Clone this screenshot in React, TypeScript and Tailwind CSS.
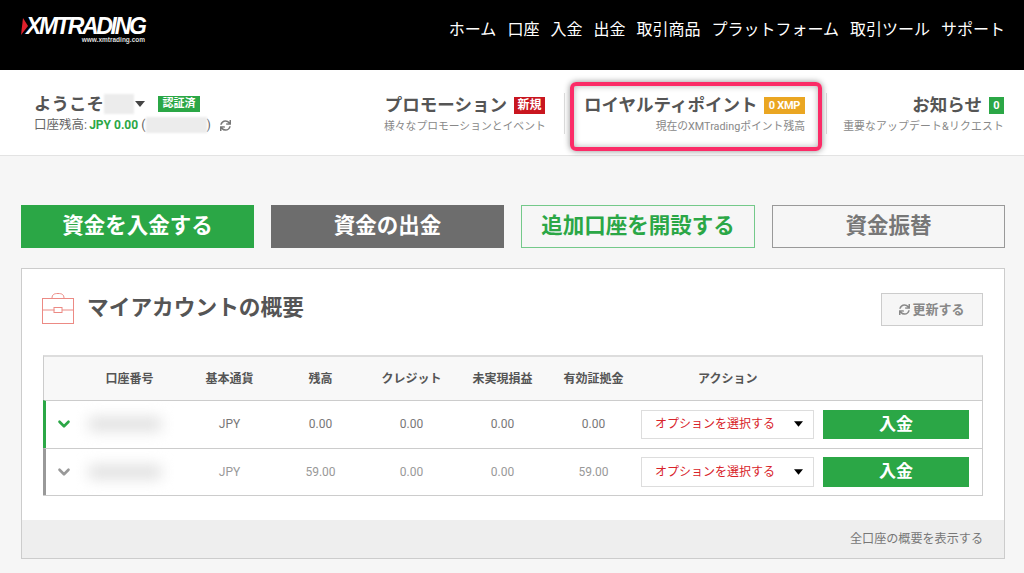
import { ChevronDown } from "lucide-react"
import { FaSync } from "react-icons/fa"

const NAV = ["ホーム", "口座", "入金", "出金", "取引商品", "プラットフォーム", "取引ツール", "サポート"]

const FONT = "font-['Roboto','Noto_Sans_CJK_JP',sans-serif]"

function Caret({ className = "" }: { className?: string }) {
  return (
    <svg width="10" height="6" viewBox="0 0 10 6" className={className}>
      <path d="M0 0h10L5 6z" fill="currentColor" />
    </svg>
  )
}

function Logo() {
  return (
    <div className="relative w-[126px] h-[30px]">
      <svg width="7" height="17" viewBox="0 0 7 17" className="absolute left-0 top-[1px]">
        <path d="M2 0l5 8-7 9z" fill="#e0202c" />
      </svg>
      <span className="absolute left-[5px] top-0 text-[23px] leading-[18px] font-black italic text-white tracking-[-2.3px] font-['Liberation_Sans',sans-serif]">
        XMTRADING
      </span>
      <span className="absolute right-[2px] top-[20px] text-[6.5px] leading-[6px] font-bold text-[#ddd] font-['Liberation_Sans',sans-serif]">
        www.xmtrading.com
      </span>
    </div>
  )
}

function Redact({ className }: { className: string }) {
  return <span className={`inline-block bg-[#ececec] blur-[1px] ${className}`} />
}

function Row({ active, balance, equity }: { active: boolean; balance: string; equity: string }) {
  const text = active ? "text-[#777]" : "text-[#999]"
  return (
    <div
      className={`grid grid-cols-[39px_99px_91px_91px_91px_91px_91px_1fr] items-center h-[47.5px] border-t border-[#ccc] border-l-[3px] -ml-px text-xs ${text} ${
        active ? "border-l-[#2ba746]" : "border-l-[#999]"
      }`}
    >
      <div className="flex justify-center pr-[3px]">
        <ChevronDown size={18} strokeWidth={3.5} className={active ? "text-[#2ba746]" : "text-[#999]"} />
      </div>
      <div className="pl-[4px]">
        <span className="block w-[72px] h-[14px] bg-[#e0e0e0] blur-[7px]" />
      </div>
      <div className="text-center">JPY</div>
      <div className="text-center">{balance}</div>
      <div className="text-center">0.00</div>
      <div className="text-center">0.00</div>
      <div className="text-center">{equity}</div>
      <div className="flex gap-[9px] pl-[2px]">
        <div className="flex items-center justify-between w-[173px] h-[29.5px] border border-[#ddd] bg-white pl-[13px] pr-[10px] text-[#d8232a]">
          <span>オプションを選択する</span>
          <Caret className="text-black w-[9px]" />
        </div>
        <div className="flex items-center justify-center w-[146px] h-[29.5px] bg-[#2ba746] text-white text-[17px] font-bold">
          入金
        </div>
      </div>
    </div>
  )
}

export default function App() {
  return (
    <div className={`${FONT} w-[1024px] h-[573px] overflow-hidden bg-[#f6f6f6] text-[#444]`}>
      <header className="flex items-center justify-between h-[70px] bg-black pl-[21px] pr-[19px]">
        <div className="-mt-[7px]">
          <Logo />
        </div>
        <nav className="flex gap-[11px] text-base text-white -mt-[11px]">
          {NAV.map((n) => (
            <a key={n}>{n}</a>
          ))}
        </nav>
      </header>

      <div className="flex h-[86px] bg-white border-b border-[#e3e3e3] pl-[34px] pr-[20px] pt-[23px]">
        <div className="w-[350px] pt-[1px]">
          <div className="flex items-center h-[20px]">
            <span className="text-[17.5px] font-bold leading-[20px] text-[#555]">ようこそ</span>
            <Redact className="w-[30px] h-[20px]" />
            <Caret className="text-[#444] ml-[1px]" />
            <span className="ml-[13px] px-[4.5px] h-[16px] leading-[16px] bg-[#2ba746] text-white text-[11px] font-bold">認証済</span>
          </div>
          <div className="flex items-center mt-[3px] text-[12.5px] text-[#666] h-[16px]">
            口座残高:&nbsp;<span className="-ml-[1px] text-xs font-bold text-[#2ba746]">JPY 0.00</span>&nbsp;(
            <Redact className="w-[61px] h-[16px]" />
            )
            <FaSync size={11} className="ml-[9px] text-[#777]" />
          </div>
        </div>

        <div className="w-[181px] pr-[20px] pt-[2px] text-right">
          <div className="flex items-center justify-end h-[20px] gap-[7px] whitespace-nowrap">
            <span className="shrink-0 text-[17.5px] font-bold text-[#555]">プロモーション</span>
            <span className="shrink-0 px-[3.5px] h-[17px] leading-[17px] bg-[#c9161f] text-white text-xs font-bold">新規</span>
          </div>
          <div className="mt-[4px] text-[10.8px] leading-[16px] text-[#888] whitespace-nowrap">様々なプロモーションとイベント</div>
        </div>

        <div className="w-[1px] h-[41px] bg-[#ddd] -ml-[1px]" />

        <div className="relative w-[261px] pl-[19px] pr-[21px] pt-[2px]">
          <div className="absolute left-[5px] top-[-11px] w-[252px] h-[69px] rounded-[6px] border-[4px] border-[#fb2c67] shadow-[0_0_6px_rgba(0,0,0,0.45),inset_0_0_6px_rgba(0,0,0,0.3)]" />
          <div className="flex items-center justify-between h-[20px]">
            <span className="text-[17.5px] font-bold text-[#555] whitespace-nowrap">ロイヤルティポイント</span>
            <span className="px-[5px] h-[17px] leading-[17px] bg-[#eaa622] text-white text-[11px] font-bold tracking-[-0.3px] whitespace-nowrap">0 XMP</span>
          </div>
          <div className="mt-[4px] text-[10.8px] leading-[16px] text-[#888] text-right">現在のXMTradingポイント残高</div>
        </div>

        <div className="w-[1px] h-[41px] bg-[#ddd]" />

        <div className="flex-1 pt-[2px] text-right">
          <div className="flex items-center justify-end h-[20px] gap-[7px]">
            <span className="text-[17.5px] font-bold text-[#555]">お知らせ</span>
            <span className="w-[15px] text-center h-[17px] leading-[17px] bg-[#2ba746] text-white text-[11px] font-bold">0</span>
          </div>
          <div className="mt-[4px] text-[10.8px] leading-[16px] tracking-[0.2px] text-[#888] whitespace-nowrap">重要なアップデート&amp;リクエスト</div>
        </div>
      </div>

      <main className="pl-[20px] pr-[19px] pt-[49px]">
        <div className="grid grid-cols-[233px_233px_234px_233px] gap-[17px] pl-[1px]">
          <button className="h-[43px] bg-[#2ba746] text-white text-[21.5px] font-bold">資金を入金する</button>
          <button className="h-[43px] bg-[#6d6d6d] text-white text-[21.5px] font-bold">資金の出金</button>
          <button className="h-[43px] border border-[#74c98a] text-[#2ba746] text-[21.5px] font-bold">追加口座を開設する</button>
          <button className="h-[43px] border border-[#999] text-[#777] text-[21.5px] font-bold">資金振替</button>
        </div>

        <section className="mt-[20px] ml-[1px] border border-[#ccc] bg-white">
          <div className="flex items-center justify-between h-[86px] pb-[5px] pl-[19px] pr-[21px]">
            <div className="flex items-center gap-[13px]">
              <svg width="33" height="33" viewBox="0 0 33 33" fill="none" stroke="#ec8a84" strokeWidth="1">
                <rect x="1.5" y="5.5" width="31" height="25" />
                <path d="M11 5.5C11 1.5 13 .5 17 .5s6 1 6 5M1.5 17h12M21 17h11.5" />
                <rect x="13" y="14.5" width="8" height="5" />
              </svg>
              <h1 className="text-[21.7px] font-bold text-[#555] -mt-[3px]">マイアカウントの概要</h1>
            </div>
            <button className="flex items-center justify-center gap-[2px] w-[102px] h-[33px] bg-[#f6f6f6] border border-[#ccc] text-[13px] font-bold text-[#888]">
              <FaSync size={11} />
              更新する
            </button>
          </div>

          <div className="mx-[21px] border border-[#ccc] border-t-2 border-t-[#ddd]">
            <div className="grid grid-cols-[41px_99px_91px_91px_91px_91px_91px_1fr] items-center h-[43px] bg-[#f8f8f8] text-xs font-bold text-[#555]">
              <div />
              <div className="text-center pr-[10px]">口座番号</div>
              <div className="text-center">基本通貨</div>
              <div className="text-center">残高</div>
              <div className="text-center">クレジット</div>
              <div className="text-center">未実現損益</div>
              <div className="text-center">有効証拠金</div>
              <div className="pl-[59px]">アクション</div>
            </div>
            <Row active balance="0.00" equity="0.00" />
            <Row active={false} balance="59.00" equity="59.00" />
          </div>

          <div className="flex items-center justify-end h-[38px] mt-[24px] bg-[#eee] pr-[21px] text-[12.1px] text-[#777]">
            全口座の概要を表示する
          </div>
        </section>
      </main>
    </div>
  )
}
